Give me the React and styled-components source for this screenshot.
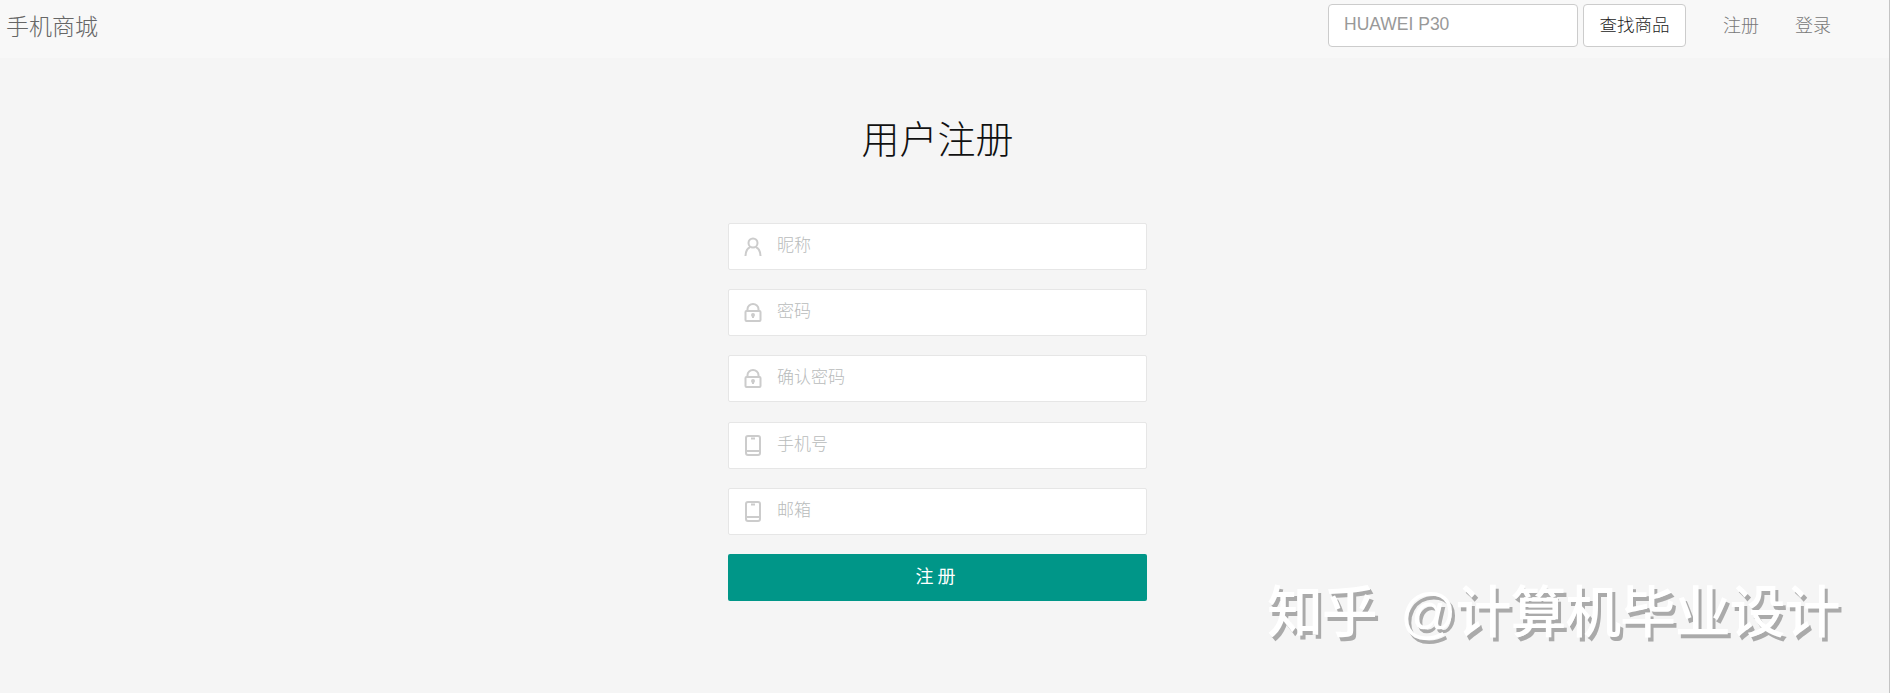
import React from "react";
import styled, { createGlobalStyle } from "styled-components";

const GlobalStyle = createGlobalStyle`
  html, body { margin: 0; padding: 0; height: 100%; background: #f5f5f5; overflow: hidden; }
  body { font-family: "Liberation Sans", "Noto Sans CJK SC", sans-serif; }
  input::placeholder { color: #b8bbbb; opacity: 1; }
`;

const Page = styled.div`
  position: relative;
  height: 693px;
  background: #f5f5f5;
  border-right: 1px solid #c4c4c4;
`;

const Header = styled.header`
  display: flex;
  align-items: flex-start;
  height: 58px;
  background: #f8f8f8;
`;

const Brand = styled.a`
  margin: 10px 0 0 6px;
  font-size: 23px;
  line-height: 34px;
  font-weight: 300;
  color: #666;
`;

const SearchForm = styled.form`
  display: flex;
  align-items: flex-start;
  gap: 5px;
  margin: 4px 0 0 auto;
`;

const SearchInput = styled.input`
  box-sizing: border-box;
  width: 250px;
  height: 43px;
  padding: 0 0 2px 15px;
  border: 1px solid #ccc;
  border-radius: 4px;
  background: #fff;
  font-family: inherit;
  font-size: 17.500px;
  &::placeholder { color: #999; }
`;

const SearchButton = styled.button`
  box-sizing: border-box;
  width: 103px;
  height: 43px;
  padding: 0 0 5px;
  border: 1px solid #ccc;
  border-radius: 4px;
  background: #fff;
  color: #222;
  font-family: inherit;
  font-size: 17.500px;
  font-weight: 300;
`;

const NavLinks = styled.nav`
  display: flex;
  gap: 36px;
  margin: 9px 58px 0 37px;
`;

const NavLink = styled.a`
  font-size: 18px;
  line-height: 34px;
  font-weight: 300;
  color: #777;
`;

const Main = styled.main`
  display: flex;
  flex-direction: column;
  align-items: center;
  padding: 57px 14px 0 0;
`;

const Title = styled.h1`
  margin: 0;
  font-size: 38px;
  font-weight: 300;
  line-height: 50px;
  color: #111;
`;

const Form = styled.form`
  display: flex;
  flex-direction: column;
  gap: 19.200px;
  width: 419px;
  margin-top: 58px;
`;

const Field = styled.label`
  position: relative;
  display: block;
  height: 47px;
`;

const FieldIcon = styled.svg`
  position: absolute;
  left: 16px;
  top: ${(p) => p.$top}px;
  width: 18px;
  height: ${(p) => p.$height}px;
  fill: none;
  stroke: #cccccc;
  stroke-width: 2;
`;

const FieldInput = styled.input`
  box-sizing: border-box;
  width: 100%;
  height: 100%;
  padding: 0 0 1px 48px;
  border: 1px solid #e6e6e6;
  border-radius: 2px;
  background: #fff;
  font-family: inherit;
  font-size: 17px;
  &::placeholder { font-weight: 300; }
`;

const Submit = styled.button`
  height: 47px;
  padding: 0 0 4px;
  border: 0;
  border-radius: 2px;
  background: #009688;
  color: #fff;
  font-family: inherit;
  font-size: 18px;
  letter-spacing: 4px;
`;

const Watermark = styled.div`
  position: absolute;
  left: 1267px;
  top: 577px;
  font-size: 56px;
  line-height: 72px;
  font-weight: 500;
  letter-spacing: -1.200px;
  word-spacing: 9px;
  white-space: nowrap;
  color: #fff;
  text-shadow: 3px 4px 0 #aaa;
`;

const UserIcon = () => (
  <FieldIcon viewBox="0 0 18 19" $top={14} $height={19}>
    <circle cx="9" cy="6" r="4.500" />
    <path d="M1.500 19c0-5 2.500-8.500 4.500-8.500M16.500 19c0-5-2.500-8.500-4.500-8.500" />
  </FieldIcon>
);

const LockIcon = () => (
  <FieldIcon viewBox="0 0 18 19" $top={14} $height={19}>
    <path d="M3.500 8V6a5.500 5 0 0 1 11 0v2" />
    <rect x="1.500" y="8" width="15" height="10" rx="1" />
    <path d="M9 12v3" />
    <circle cx="9" cy="12" r="1" fill="#ccc" />
  </FieldIcon>
);

const PhoneIcon = () => (
  <FieldIcon viewBox="0 0 18 21" $top={13} $height={21}>
    <rect x="2" y="1" width="14" height="19" rx="2" />
    <path d="M2 16h14M7 3.500h4" />
  </FieldIcon>
);

const fields = [
  { placeholder: "昵称", Icon: UserIcon },
  { placeholder: "密码", Icon: LockIcon },
  { placeholder: "确认密码", Icon: LockIcon },
  { placeholder: "手机号", Icon: PhoneIcon },
  { placeholder: "邮箱", Icon: PhoneIcon },
];

export default function App() {
  return (
    <Page>
      <GlobalStyle />
      <Header>
        <Brand>手机商城</Brand>
        <SearchForm>
          <SearchInput placeholder="HUAWEI P30" />
          <SearchButton type="button">查找商品</SearchButton>
        </SearchForm>
        <NavLinks>
          <NavLink>注册</NavLink>
          <NavLink>登录</NavLink>
        </NavLinks>
      </Header>
      <Main>
        <Title>用户注册</Title>
        <Form>
          {fields.map(({ placeholder, Icon }) => (
            <Field key={placeholder}>
              <Icon />
              <FieldInput placeholder={placeholder} />
            </Field>
          ))}
          <Submit type="button">注册</Submit>
        </Form>
      </Main>
      <Watermark>知乎 @计算机毕业设计</Watermark>
    </Page>
  );
}
